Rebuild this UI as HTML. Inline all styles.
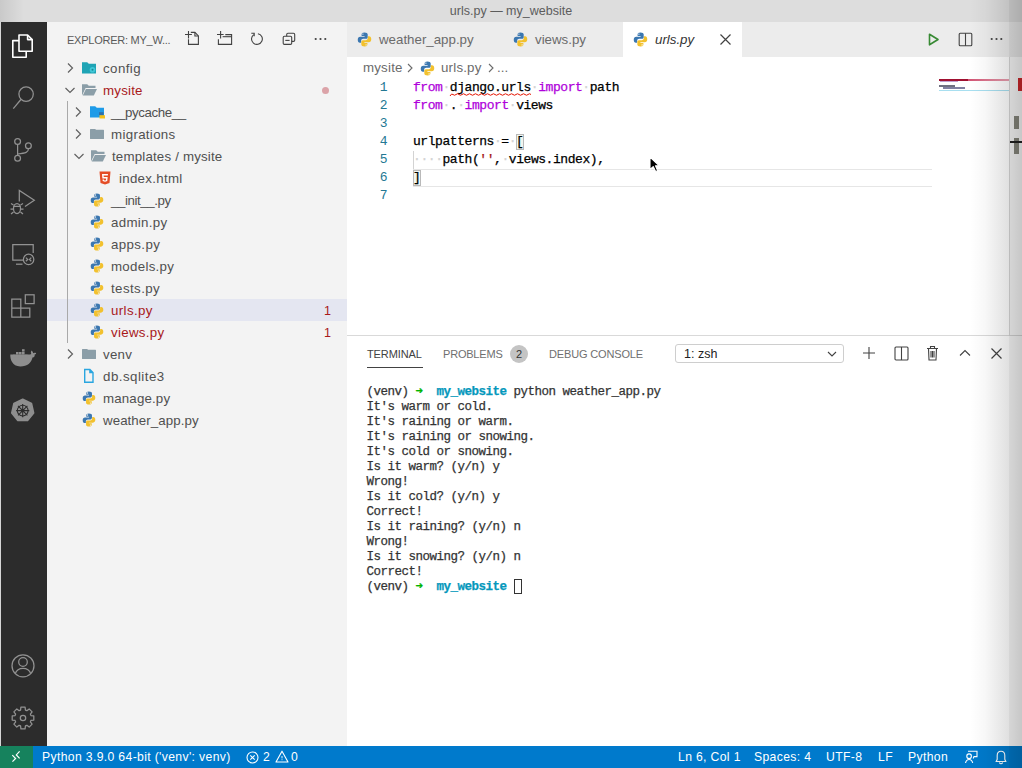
<!DOCTYPE html>
<html><head><meta charset="utf-8">
<style>
*{box-sizing:border-box;margin:0;padding:0}
html,body{width:1022px;height:768px;overflow:hidden;background:#fff}
body{position:relative;font-family:"Liberation Sans",sans-serif;font-size:13px;color:#616161}
.a{position:absolute}
.mono{font-family:"Liberation Mono",monospace}
svg{position:absolute;overflow:visible}
#title{left:0;top:0;width:1022px;height:22px;background:#dddddd}
#act{left:0;top:22px;width:47px;height:724px;background:#2c2c2c}
#side{left:47px;top:22px;width:300px;height:724px;background:#f3f3f3}
#tabs{left:347px;top:22px;width:675px;height:35px;background:#f3f3f3}
#status{left:0;top:746px;width:1022px;height:22px;background:#007acc;color:#fff;font-size:12.2px;letter-spacing:0.35px}
.row{position:absolute;left:0;width:300px;height:22px;line-height:22px;white-space:nowrap;color:#505050;font-size:13.3px;letter-spacing:0.45px}
.t{position:absolute;top:1px}
.code{position:absolute;left:413px;-webkit-text-stroke:0.25px currentColor;font-family:"Liberation Mono",monospace;font-size:13px;letter-spacing:-0.44px;line-height:18px;height:18px;white-space:pre;color:#000}
.ln{position:absolute;left:360px;width:27px;text-align:right;font-family:"Liberation Mono",monospace;font-size:13px;letter-spacing:-0.44px;line-height:18px;color:#237893}
.kw{color:#af00db}
.str{color:#a31515}
.ws{color:#d3d3d3}
.term{position:absolute;left:366.5px;-webkit-text-stroke:0.25px currentColor;font-family:"Liberation Mono",monospace;font-size:12.5px;letter-spacing:-0.5px;line-height:15px;height:15px;white-space:pre;color:#333}
.grn{color:#00b400;font-weight:bold}.cy{color:#0598bc;font-weight:bold}
</style></head><body>
<svg width="0" height="0" style="position:absolute">
<defs>
<symbol id="py" viewBox="0 0 16 16">
<path fill="#3b77b0" fill-rule="evenodd" d="M7.9 0.6C5.7 0.6 4.9 1.4 4.9 2.7V4.3H8.1V5H3.4C1.8 5 0.8 6.1 0.8 8.2C0.8 10.4 1.7 11.4 3.1 11.4H4.4V9.6C4.4 8.3 5.4 7.3 6.6 7.3H9.7C10.7 7.3 11.4 6.5 11.4 5.5V2.7C11.4 1.4 10.2 0.6 7.9 0.6ZM6.3 1.5A0.75 0.75 0 1 0 6.3 3A0.75 0.75 0 1 0 6.3 1.5Z"/>
<path fill="#f2c12e" fill-rule="evenodd" d="M8.1 15.4C10.3 15.4 11.1 14.6 11.1 13.3V11.7H7.9V11H12.6C14.2 11 15.2 9.9 15.2 7.8C15.2 5.6 14.3 4.6 12.9 4.6H11.6V6.4C11.6 7.7 10.6 8.7 9.4 8.7H6.3C5.3 8.7 4.6 9.5 4.6 10.5V13.3C4.6 14.6 5.8 15.4 8.1 15.4ZM9.7 14.5A0.75 0.75 0 1 0 9.7 13A0.75 0.75 0 1 0 9.7 14.5Z"/>
</symbol>
<symbol id="chevR" viewBox="0 0 16 16"><path d="M6 3.5L10.5 8L6 12.5" fill="none" stroke="#616161" stroke-width="1.2"/></symbol>
<symbol id="chevD" viewBox="0 0 16 16"><path d="M3.5 6L8 10.5L12.5 6" fill="none" stroke="#616161" stroke-width="1.2"/></symbol>
<symbol id="fold" viewBox="0 0 16 16"><path fill="#8b9ea8" d="M0 3.6Q0 3 0.6 3H5L6.2 3.8H13.4Q14 3.8 14 4.4V12.4Q14 13 13.4 13H0.6Q0 13 0 12.4Z"/></symbol>
<symbol id="foldOpen" viewBox="0 0 16 16"><path fill="#8b9ea8" d="M0 2.2H5.2L6.8 3.8H13.5V6H3.6L0 13.6Z"/><path fill="#8b9ea8" d="M3.9 6.9H15L11.8 13.6H0.8Z"/></symbol>
</defs></svg>
<div id="title" class="a"><div class="a" style="left:0;top:0;width:24px;height:22px;background:linear-gradient(to right,rgba(0,0,0,0.09),rgba(0,0,0,0))"></div><div class="a" style="left:0;width:1022px;top:0;height:22px;line-height:22px;text-align:center;color:#5c5c5c;font-size:12.5px">urls.py — my_website</div></div>
<div id="act" class="a">
 <svg style="left:0;top:-22px" width="47" height="768" viewBox="0 0 47 768">
  <g fill="none" stroke="#ffffff" stroke-width="1.6" stroke-linejoin="round">
   <path d="M19 35H27.6L32.2 39.6V51.2H19Z"/><path d="M27.6 35V39.6H32.2"/><path d="M19 40.6H12.8V57.2H26.2V51.2"/>
  </g>
  <g fill="none" stroke="#929292" stroke-width="1.25">
   <circle cx="26.1" cy="94.1" r="7.2"/><path d="M20.9 99.5L13.3 108.6"/>
   <circle cx="17.6" cy="141.4" r="2.9"/><circle cx="28.4" cy="145.8" r="2.9"/><circle cx="17.6" cy="158.3" r="2.9"/>
   <path d="M17.6 144.3V155.4"/><path d="M28.4 148.7C28.4 152.3 26 153.3 17.6 154"/>
   <path d="M19.3 201.5V190.5L34.3 200.3L25 206.5"/>
   <ellipse cx="17" cy="208.5" rx="3.5" ry="5"/><path d="M13.5 206.3H20.5M13.5 205L11 203.5M20.5 205L23 203.5M13.5 209H10.5M20.5 209H23.5M13.5 212L11 214M20.5 212L23 214"/>
   <path d="M23 260H12.8V244.6H33.2V253"/><path d="M16 264.2H22.5"/><circle cx="28.6" cy="259.4" r="5.2"/><path d="M25.9 257.6L27.7 259.4L25.9 261.2M31.3 257.6L29.5 259.4L31.3 261.2"/>
   <path d="M11.8 299.2H20.8V308.2H29.8V317.2H11.8Z M11.8 308.2H20.8V317.2"/><rect x="25.3" y="294.8" width="8.8" height="8.8"/>
   <circle cx="23" cy="665.8" r="11"/><circle cx="23" cy="662" r="4.3"/><path d="M15.2 673.8C16.5 670 19.4 668.3 23 668.3C26.6 668.3 29.5 670 30.8 673.8"/>
   <circle cx="23" cy="718" r="2.7"/>
   <path stroke-linejoin="round" d="M20.55 710.07 L20.92 707.20 L25.08 707.20 L25.45 710.07 L26.87 710.66 L29.17 708.89 L32.11 711.83 L30.34 714.13 L30.93 715.55 L33.80 715.92 L33.80 720.08 L30.93 720.45 L30.34 721.87 L32.11 724.17 L29.17 727.11 L26.87 725.34 L25.45 725.93 L25.08 728.80 L20.92 728.80 L20.55 725.93 L19.13 725.34 L16.83 727.11 L13.89 724.17 L15.66 721.87 L15.07 720.45 L12.20 720.08 L12.20 715.92 L15.07 715.55 L15.66 714.13 L13.89 711.83 L16.83 708.89 L19.13 710.66Z"/>
  </g>
  <g fill="#8e8e8e">
   <path d="M10.5 357.5H32.5C34.5 357.5 35 356 34.6 354.6C36 354.4 36.3 353.6 36 353C35 352.4 33.8 352.6 33.2 353.2C32.9 351.8 32.2 351 31.5 350.6C30.6 351.7 30.8 353.2 31.3 354C30.5 354.6 29.5 354.6 28.6 354.6H10.3C10 359 12 366.5 20.3 366.5C27.5 366.5 31.5 362.5 32.5 357.5Z"/>
   <rect x="13" y="354.7" width="2.6" height="2.4"/><rect x="16" y="354.7" width="2.6" height="2.4"/><rect x="19" y="354.7" width="2.6" height="2.4"/><rect x="22" y="354.7" width="2.6" height="2.4"/><rect x="25" y="354.7" width="2.6" height="2.4"/>
   <rect x="16" y="352" width="2.6" height="2.4"/><rect x="19" y="352" width="2.6" height="2.4"/><rect x="22" y="352" width="2.6" height="2.4"/><rect x="22" y="349.2" width="2.6" height="2.4"/>
   <path stroke="#8e8e8e" stroke-width="1.6" stroke-linejoin="round" d="M22.70 399.20 L31.46 403.42 L33.62 412.89 L27.56 420.49 L17.84 420.49 L11.78 412.89 L13.94 403.42Z"/>
  </g>
  <g fill="none" stroke="#2c2c2c" stroke-width="1.1">
   <circle cx="22.7" cy="410.6" r="5.4"/><circle cx="22.7" cy="410.6" r="1.1"/><path d="M22.7 404V417.2M16.1 410.6H29.3M18 405.9L27.4 415.3M27.4 405.9L18 415.3"/>
  </g>
 </svg>
</div>

<div id="side" class="a">
 <div class="a" style="left:20px;top:10px;height:16px;line-height:16px;font-size:11px;color:#5a5a5a;letter-spacing:-0.25px">EXPLORER: MY_W...</div>
 <svg style="left:135px;top:6px" width="56" height="22" viewBox="182 28 56 22"><g fill="none" stroke="#424242" stroke-width="1.1">
 <path d="M185 34.5H191.9M188.5 31V38.4"/><path d="M190.8 32.4H194.9L198.4 35.9V44.4H188.5V39.2"/><path d="M194.9 32.4V36H198.4"/>
 <path d="M217 34.5H223.6M220.6 31V38.4"/><path d="M218.4 39.2V44.4H231.6V34.6H225.3"/><path d="M222.6 36.7H231.6"/>
</g></svg>
 <svg style="left:197px;top:6px" width="56" height="22" viewBox="244 28 56 22"><g fill="none" stroke="#424242" stroke-width="1.1">
 <path d="M257.9 33.7A5.4 5.4 0 1 1 253.8 34.6"/><path d="M251.3 33.3H254.2V36.3"/>
 <path d="M286.7 36.2V34.4Q286.7 33.2 287.9 33.2H293.5Q294.7 33.2 294.7 34.4V40.2Q294.7 41.4 293.5 41.4H291.7"/>
 <rect x="283.2" y="36.2" width="8.5" height="8.2" rx="1.2"/><path d="M285.3 40.4H289.6"/>
</g></svg>
 <svg style="left:267px;top:15px" width="14" height="4" viewBox="0 0 14 4"><circle cx="1.7" cy="2" r="1.1" fill="#424242"/><circle cx="6.5" cy="2" r="1.1" fill="#424242"/><circle cx="11.3" cy="2" r="1.1" fill="#424242"/></svg>
 <div class="row" style="top:35px;"><svg style="left:15px;top:3px" width="16" height="16"><use href="#chevR"/></svg><svg style="left:35px;top:3px" width="16" height="16" viewBox="0 0 16 16"><path fill="#1fa4b5" d="M0 2.2H5.2L6.8 3.8H14V13.6H0Z"/><circle cx="10.5" cy="9.8" r="2.8" fill="#40c8d8"/><circle cx="10.5" cy="9.8" r="1" fill="#1a8a98"/></svg><span class="t" style="left:56px;color:#505050;letter-spacing:0.42px">config</span></div>
 <div class="row" style="top:57px;"><svg style="left:15px;top:3px" width="16" height="16"><use href="#chevD"/></svg><svg style="left:35px;top:3px" width="16" height="16"><use href="#foldOpen"/></svg><span class="t" style="left:56px;color:#a8191b;letter-spacing:0.22px">mysite</span><span class="a" style="left:275px;top:8px;width:7px;height:7px;border-radius:50%;background:#dba3a8"></span></div>
 <div class="row" style="top:79px;"><svg style="left:23px;top:3px" width="16" height="16"><use href="#chevR"/></svg><svg style="left:43px;top:3px" width="16" height="16" viewBox="0 0 16 16"><path fill="#1e9be8" d="M0 2.2H5.2L6.8 3.8H14V13.6H0Z"/><path fill="#2f6fa8" d="M9 8.2H13.5V11.2H9Z"/><path fill="#f5c018" d="M9.5 11.2H15V14.5H9.5Z"/></svg><span class="t" style="left:64px;color:#505050;letter-spacing:-0.39px">__pycache__</span></div>
 <div class="row" style="top:101px;"><svg style="left:23px;top:3px" width="16" height="16"><use href="#chevR"/></svg><svg style="left:43px;top:3px" width="16" height="16"><use href="#fold"/></svg><span class="t" style="left:64px;color:#505050;letter-spacing:0.32px">migrations</span></div>
 <div class="row" style="top:123px;"><svg style="left:24px;top:3px" width="16" height="16"><use href="#chevD"/></svg><svg style="left:44px;top:3px" width="16" height="16"><use href="#foldOpen"/></svg><span class="t" style="left:65px;color:#505050;letter-spacing:0.18px">templates / mysite</span></div>
 <div class="row" style="top:145px;"><svg style="left:51px;top:4px" width="14" height="14" viewBox="0 0 14 14"><path fill="#e44d26" d="M1.5 0.5h11l-1 11.5L7 13.5 2.5 12z"/><path fill="#fff" d="M4 3h6l-.2 1.5H5.6l.15 1.6h3.9l-.4 4L7 10.8l-2.3-.7-.15-1.7h1.4l.08.8L7 9.5l1-.3.13-1.6H4.4z"/></svg><span class="t" style="left:72px;color:#505050;letter-spacing:0.29px">index.html</span></div>
 <div class="row" style="top:167px;"><svg style="left:43px;top:4px" width="14" height="14"><use href="#py"/></svg><span class="t" style="left:64px;color:#505050;letter-spacing:-0.41px">__init__.py</span></div>
 <div class="row" style="top:189px;"><svg style="left:43px;top:4px" width="14" height="14"><use href="#py"/></svg><span class="t" style="left:64px;color:#505050;letter-spacing:0.32px">admin.py</span></div>
 <div class="row" style="top:211px;"><svg style="left:43px;top:4px" width="14" height="14"><use href="#py"/></svg><span class="t" style="left:64px;color:#505050;letter-spacing:0.37px">apps.py</span></div>
 <div class="row" style="top:233px;"><svg style="left:43px;top:4px" width="14" height="14"><use href="#py"/></svg><span class="t" style="left:64px;color:#505050;letter-spacing:0.29px">models.py</span></div>
 <div class="row" style="top:255px;"><svg style="left:43px;top:4px" width="14" height="14"><use href="#py"/></svg><span class="t" style="left:64px;color:#505050;letter-spacing:0.42px">tests.py</span></div>
 <div class="row" style="top:277px;background:#e4e6f1;"><svg style="left:43px;top:4px" width="14" height="14"><use href="#py"/></svg><span class="t" style="left:64px;color:#a8191b;letter-spacing:0.39px">urls.py</span><span class="t" style="left:277px;color:#a8191b;font-size:12.5px">1</span></div>
 <div class="row" style="top:299px;"><svg style="left:43px;top:4px" width="14" height="14"><use href="#py"/></svg><span class="t" style="left:64px;color:#a8191b;letter-spacing:0.31px">views.py</span><span class="t" style="left:277px;color:#a8191b;font-size:12.5px">1</span></div>
 <div class="row" style="top:321px;"><svg style="left:15px;top:3px" width="16" height="16"><use href="#chevR"/></svg><svg style="left:35px;top:3px" width="16" height="16"><use href="#fold"/></svg><span class="t" style="left:56px;color:#505050;letter-spacing:0.27px">venv</span></div>
 <div class="row" style="top:343px;"><svg style="left:35px;top:3px" width="16" height="16" viewBox="0 0 16 16"><path fill="none" stroke="#2aa6e0" stroke-width="1.4" d="M2.7 1.5H7.9L11 4.6V14.3H2.7Z M7.9 1.5V4.6H11"/></svg><span class="t" style="left:56px;color:#505050;letter-spacing:0.48px">db.sqlite3</span></div>
 <div class="row" style="top:365px;"><svg style="left:35px;top:4px" width="14" height="14"><use href="#py"/></svg><span class="t" style="left:56px;color:#505050;letter-spacing:0.16px">manage.py</span></div>
 <div class="row" style="top:387px;"><svg style="left:35px;top:4px" width="14" height="14"><use href="#py"/></svg><span class="t" style="left:56px;color:#505050;letter-spacing:0.07px">weather_app.py</span></div>
 <div class="a" style="left:20px;top:79px;width:1px;height:242px;background:#a9a9a9"></div>
</div>
<div id="tabs" class="a">
 <div class="a" style="left:0;top:0;width:276px;height:35px;background:#ececec"></div>
 <div class="a" style="left:395px;top:0;width:280px;height:35px;background:#ececec"></div>
 <svg style="left:10px;top:10px" width="15" height="15"><use href="#py"/></svg>
 <div class="a" style="left:32px;top:0;height:35px;line-height:35px;font-size:13.3px;color:#6b6b6b;letter-spacing:0px">weather_app.py</div>
 <svg style="left:166px;top:10px" width="15" height="15"><use href="#py"/></svg>
 <div class="a" style="left:188px;top:0;height:35px;line-height:35px;font-size:13.3px;color:#6b6b6b;letter-spacing:0px">views.py</div>
 <div class="a" style="left:276px;top:0;width:119px;height:35px;background:#ffffff"></div>
 <svg style="left:286px;top:10px" width="15" height="15"><use href="#py"/></svg>
 <div class="a" style="left:308px;top:0;height:35px;line-height:35px;font-size:13.3px;color:#333;font-style:italic;letter-spacing:0px">urls.py</div>
 <svg style="left:372px;top:11px" width="13" height="13" viewBox="0 0 13 13"><path d="M1.5 1.5L11.5 11.5M11.5 1.5L1.5 11.5" stroke="#424242" stroke-width="1.2"/></svg>
 <svg style="left:579px;top:10px" width="15" height="15" viewBox="0 0 15 15"><path d="M3.5 2.2L12 7.5L3.5 12.8Z" fill="none" stroke="#388a34" stroke-width="1.6" stroke-linejoin="round"/></svg>
 <svg style="left:611px;top:10px" width="15" height="15" viewBox="0 0 15 15"><rect x="1.2" y="1.2" width="12.6" height="12.6" rx="1" fill="none" stroke="#424242" stroke-width="1.1"/><path d="M7.5 1.2V13.8" stroke="#424242" stroke-width="1.1"/></svg>
 <svg style="left:643px;top:15px" width="14" height="4" viewBox="0 0 14 4"><circle cx="1.7" cy="2" r="1.1" fill="#424242"/><circle cx="6.5" cy="2" r="1.1" fill="#424242"/><circle cx="11.3" cy="2" r="1.1" fill="#424242"/></svg>
</div>
<div id="editor" class="a" style="left:347px;top:57px;width:675px;height:278px;background:#fff"></div>
<div class="a" style="left:363px;top:57px;height:22px;line-height:22px;font-size:13.3px;color:#6b6b6b;letter-spacing:0.2px">mysite</div>
<svg style="left:404px;top:62px" width="12" height="12" viewBox="0 0 12 12"><path d="M4 2L8 6L4 10" fill="none" stroke="#6b6b6b" stroke-width="1.1"/></svg>
<svg style="left:420px;top:61px" width="15" height="15"><use href="#py"/></svg>
<div class="a" style="left:441px;top:57px;height:22px;line-height:22px;font-size:13.3px;color:#6b6b6b;letter-spacing:0.2px">urls.py</div>
<svg style="left:485px;top:62px" width="12" height="12" viewBox="0 0 12 12"><path d="M4 2L8 6L4 10" fill="none" stroke="#6b6b6b" stroke-width="1.1"/></svg>
<div class="a" style="left:497px;top:57px;height:22px;line-height:22px;font-size:13.3px;color:#6b6b6b">...</div>
<div class="a" style="left:413px;top:169px;width:519px;height:18px;border-top:1px solid #e6e6e6;border-bottom:1px solid #e6e6e6"></div>
<div class="ln" style="top:79px">1</div>
<div class="ln" style="top:97px">2</div>
<div class="ln" style="top:115px">3</div>
<div class="ln" style="top:133px">4</div>
<div class="ln" style="top:151px">5</div>
<div class="ln" style="top:169px">6</div>
<div class="ln" style="top:187px">7</div>
<div class="code" style="top:79px"><span class="kw">from</span><span class="ws">·</span>django.urls<span class="ws">·</span><span class="kw">import</span><span class="ws">·</span>path</div>
<div class="code" style="top:97px"><span class="kw">from</span><span class="ws">·</span>.<span class="ws">·</span><span class="kw">import</span><span class="ws">·</span>views</div>
<div class="code" style="top:133px">urlpatterns<span class="ws">·</span>=<span class="ws">·</span>[</div>
<div class="code" style="top:151px"><span class="ws">·</span><span class="ws">·</span><span class="ws">·</span><span class="ws">·</span>path(<span class="str">''</span>,<span class="ws">·</span>views.index),</div>
<div class="code" style="top:169px">]</div>
<div class="a" style="left:413px;top:151px;width:1px;height:18px;background:#d3d3d3"></div>
<div class="a" style="left:516px;top:134px;width:8px;height:16px;border:1px solid #b9b9b9;background:rgba(0,100,0,0.06)"></div>
<div class="a" style="left:413px;top:170px;width:8px;height:16px;border:1px solid #b9b9b9;background:rgba(0,100,0,0.06)"></div>
<svg style="left:450px;top:93px" width="82" height="4" viewBox="0 0 82 4"><path d="M0 3 Q1.5 0 3 1.5 T6 1.5 T9 1.5 T12 1.5 T15 1.5 T18 1.5 T21 1.5 T24 1.5 T27 1.5 T30 1.5 T33 1.5 T36 1.5 T39 1.5 T42 1.5 T45 1.5 T48 1.5 T51 1.5 T54 1.5 T57 1.5 T60 1.5 T63 1.5 T66 1.5 T69 1.5 T72 1.5 T75 1.5 T78 1.5 T81 1.5" fill="none" stroke="#e51400" stroke-width="1"/></svg>
<svg style="left:649px;top:155.5px" width="14" height="20" viewBox="0 0 14 20"><path d="M1 1V13.5L4.2 10.6L6.6 15.6L8.7 14.7L6.5 9.8H10.3Z" fill="#000" stroke="#fff" stroke-width="1.1" stroke-linejoin="round"/></svg>
<div class="a" style="left:939px;top:79px;width:70px;height:2px;background:linear-gradient(to right,#c8305a 0,#d05070 40%,#e8a0b0 100%)"></div>
<div class="a" style="left:939px;top:79px;width:29px;height:2px;background:#a01030"></div>
<div class="a" style="left:940px;top:81px;width:18px;height:1px;background:#c0a0d0"></div>
<div class="a" style="left:939px;top:85px;width:16px;height:2px;background:#707080"></div>
<div class="a" style="left:943px;top:87px;width:22px;height:2px;background:#8080a0"></div>
<div class="a" style="left:939px;top:90px;width:70px;height:1px;background:#a8dff0"></div>
<div id="panel" class="a" style="left:347px;top:335px;width:675px;height:411px;background:#fff;border-top:1px solid #d9d9d9"></div>
<div class="a" style="left:367px;top:346px;height:16px;line-height:16px;font-size:11px;color:#424242;letter-spacing:-0.1px">TERMINAL</div>
<div class="a" style="left:367px;top:367px;width:56px;height:1px;background:#424242"></div>
<div class="a" style="left:443px;top:346px;height:16px;line-height:16px;font-size:11px;color:#6f6f6f;letter-spacing:-0.2px">PROBLEMS</div>
<div class="a" style="left:510px;top:345px;width:18px;height:18px;border-radius:9px;background:#c4c4c4;color:#333;font-size:11px;line-height:18px;text-align:center">2</div>
<div class="a" style="left:549px;top:346px;height:16px;line-height:16px;font-size:11px;color:#6f6f6f;letter-spacing:-0.15px">DEBUG CONSOLE</div>
<div class="a" style="left:675px;top:344px;width:169px;height:19px;border:1px solid #cecece;border-radius:3px;background:#fff"></div>
<div class="a" style="left:684px;top:345px;height:19px;line-height:19px;font-size:12.5px;color:#222">1: zsh</div>
<svg style="left:826px;top:348px" width="12" height="12" viewBox="0 0 12 12"><path d="M2 4L6 8L10 4" fill="none" stroke="#424242" stroke-width="1.1"/></svg>
<svg style="left:862px;top:346px" width="14" height="14" viewBox="0 0 14 14"><path d="M7 1V13M1 7H13" stroke="#424242" stroke-width="1.1"/></svg>
<svg style="left:894px;top:346px" width="15" height="15" viewBox="0 0 15 15"><rect x="1" y="1" width="13" height="13" rx="1" fill="none" stroke="#424242" stroke-width="1.1"/><path d="M7.5 1V14" stroke="#424242" stroke-width="1.1"/></svg>
<svg style="left:925px;top:345px" width="15" height="16" viewBox="0 0 15 16"><path d="M2 3.5H13M5.5 3.5V1.5H9.5V3.5M3.5 3.5L4 15H11L11.5 3.5M6 6V12.5M7.5 6V12.5M9 6V12.5" fill="none" stroke="#424242" stroke-width="1.1"/></svg>
<svg style="left:958px;top:347px" width="14" height="12" viewBox="0 0 14 12"><path d="M2 8.5L7 3.5L12 8.5" fill="none" stroke="#424242" stroke-width="1.1"/></svg>
<svg style="left:990px;top:347px" width="13" height="13" viewBox="0 0 13 13"><path d="M1.5 1.5L11.5 11.5M11.5 1.5L1.5 11.5" stroke="#424242" stroke-width="1.2"/></svg>
<div class="term" style="top:385.4px">(venv) <span class="grn">➜</span>  <span class="cy">my_website</span> python weather_app.py</div>
<div class="term" style="top:400.4px">It's warm or cold.</div>
<div class="term" style="top:415.4px">It's raining or warm.</div>
<div class="term" style="top:430.4px">It's raining or snowing.</div>
<div class="term" style="top:445.4px">It's cold or snowing.</div>
<div class="term" style="top:460.4px">Is it warm? (y/n) y</div>
<div class="term" style="top:475.4px">Wrong!</div>
<div class="term" style="top:490.4px">Is it cold? (y/n) y</div>
<div class="term" style="top:505.4px">Correct!</div>
<div class="term" style="top:520.4px">Is it raining? (y/n) n</div>
<div class="term" style="top:535.4px">Wrong!</div>
<div class="term" style="top:550.4px">Is it snowing? (y/n) n</div>
<div class="term" style="top:565.4px">Correct!</div>
<div class="term" style="top:580.4px">(venv) <span class="grn">➜</span>  <span class="cy">my_website</span> </div>
<div class="a" style="left:514px;top:579px;width:8px;height:15px;border:1.3px solid #333"></div>
<div class="a" style="left:0;top:22px;width:1px;height:724px;background:#d6d6d6"></div>

<div class="a" style="left:1009px;top:57px;width:1px;height:278px;background:rgba(0,0,0,0.12)"></div>
<div class="a" style="left:1018px;top:78px;width:4px;height:13px;background:#d0282c"></div>
<div class="a" style="left:1014px;top:116px;width:5px;height:13px;background:#8a8a80"></div>
<div class="a" style="left:1014px;top:138px;width:5px;height:16px;background:#8a8a80"></div>
<div class="a" style="left:1010px;top:141px;width:12px;height:2px;background:#222"></div>
<div id="status" class="a">
 <div class="a" style="left:0;top:0;width:33px;height:22px;background:#16825d"></div>
 <svg style="left:10px;top:4px" width="12" height="14" viewBox="0 0 12 14"><path d="M2.3 1.2L5.6 4.5L2.45 7.6M9.6 -2.7L6.3 0.9L9.6 4.3" transform="translate(0,4)" fill="none" stroke="#fff" stroke-width="1.2"/></svg>
 <div class="a" style="left:42px;top:0;height:22px;line-height:22px">Python 3.9.0 64-bit ('venv': venv)</div>
 <svg style="left:246px;top:5px" width="13" height="13" viewBox="0 0 13 13"><circle cx="6.5" cy="6.5" r="5.5" fill="none" stroke="#fff" stroke-width="1.1"/><path d="M4.3 4.3L8.7 8.7M8.7 4.3L4.3 8.7" stroke="#fff" stroke-width="1.1"/></svg>
 <div class="a" style="left:263px;top:0;height:22px;line-height:22px">2</div>
 <svg style="left:275px;top:4px" width="14" height="13" viewBox="0 0 14 13"><path d="M7 1.2L13 12H1Z" fill="none" stroke="#fff" stroke-width="1.1" stroke-linejoin="round"/><path d="M7 6V8.4M7 9.3V10.2" stroke="#fff" stroke-width="0.9"/></svg>
 <div class="a" style="left:291px;top:0;height:22px;line-height:22px">0</div>
 <div class="a" style="left:678px;top:0;height:22px;line-height:22px">Ln 6, Col 1</div>
 <div class="a" style="left:754px;top:0;height:22px;line-height:22px">Spaces: 4</div>
 <div class="a" style="left:826px;top:0;height:22px;line-height:22px">UTF-8</div>
 <div class="a" style="left:878px;top:0;height:22px;line-height:22px">LF</div>
 <div class="a" style="left:908px;top:0;height:22px;line-height:22px">Python</div>
 <svg style="left:963px;top:4px" width="16" height="15" viewBox="0 0 16 15"><path d="M5 1.3H14V6.6H11L10.2 8.5" fill="none" stroke="#fff" stroke-width="1.1"/><circle cx="6.1" cy="6.2" r="2.3" fill="none" stroke="#fff" stroke-width="1.1"/><path d="M2.5 13C3 10.8 4.3 9.5 6.1 9.5C7.9 9.5 9.2 10.8 9.7 13" fill="none" stroke="#fff" stroke-width="1.1"/></svg>
 <svg style="left:995px;top:4px" width="12" height="15" viewBox="0 0 12 15"><path d="M6 1.2C3.6 1.2 2.2 3 2.2 5.5V9.3L1.2 11.5H10.8L9.8 9.3V5.5C9.8 3 8.4 1.2 6 1.2ZM4.4 12.5C4.7 13.4 5.3 13.8 6 13.8C6.7 13.8 7.3 13.4 7.6 12.5" fill="none" stroke="#fff" stroke-width="1.1"/></svg>
</div>
<div class="a" style="left:970px;top:0;width:39px;height:768px;background:linear-gradient(to right,rgba(0,0,0,0) 0,rgba(0,0,0,0.03) 40%,rgba(0,0,0,0.12) 100%)"></div>
<div class="a" style="left:1009px;top:0;width:13px;height:768px;background:linear-gradient(to right,rgba(0,0,0,0.16),rgba(0,0,0,0.22))"></div>
</body></html>
